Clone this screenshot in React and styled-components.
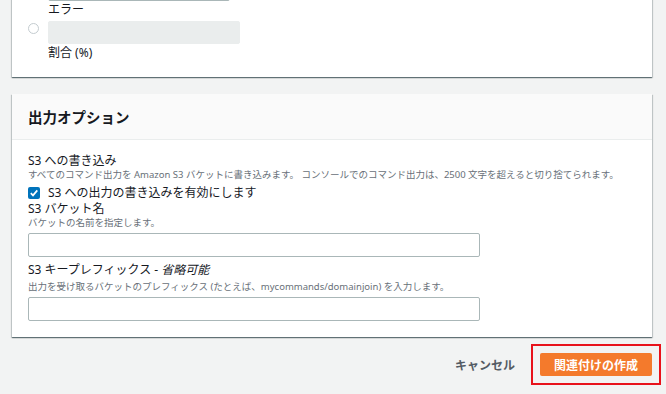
import React from "react";
import styled, { createGlobalStyle } from "styled-components";

const Global = createGlobalStyle`
  html, body { margin: 0; padding: 0; background: #f2f3f3; }
  body {
    font-family: "Noto Sans", "Noto Sans CJK JP", sans-serif;
    color: #16191f;
    width: 666px; height: 394px; overflow: hidden;
  }
  * { box-sizing: border-box; }
`;

const Page = styled.div`
  display: flex;
  flex-direction: column;
  padding: 0 14px 0 12px;
  margin-top: -23px;
`;

const Card = styled.section`
  background: #fff;
  box-shadow: 0 1px 1px 0 rgba(0, 28, 36, 0.45), 1px 1px 1px 0 rgba(0, 28, 36, 0.15),
    -1px 1px 1px 0 rgba(0, 28, 36, 0.15);
  margin-bottom: ${(p) => p.$mb || 0}px;
`;

const CardBody = styled.div`
  display: flex;
  flex-direction: column;
  padding: ${(p) => p.$pad};
`;

const CardHeader = styled.header`
  background: #fafafa;
  border-bottom: 1px solid #eaeded;
  height: 46px;
  display: flex;
  align-items: center;
  padding: 0 16px;
`;

const Title = styled.h2`
  margin: 0;
  font-size: 14.5px;
  font-weight: 700;
  line-height: 20px;
`;

const OptionRow = styled.div`
  display: flex;
  align-items: flex-start;
  gap: 9px;
  margin-bottom: ${(p) => p.$mb || 0}px;
`;

const Radio = styled.span`
  width: 11px;
  height: 11px;
  margin-top: 2px;
  border-radius: 50%;
  border: 1px solid #c4ccd0;
  background: #fff;
  flex: none;
  visibility: ${(p) => (p.$hidden ? "hidden" : "visible")};
`;

const OptionCol = styled.div`
  display: flex;
  flex-direction: column;
`;

const FieldBox = styled.div`
  width: ${(p) => p.$w}px;
  height: ${(p) => p.$h || 24}px;
  flex: none;
  border-radius: 2px;
  border: 1px solid ${(p) => (p.$disabled ? "#eaeded" : "#aab7b8")};
  background: ${(p) => (p.$disabled ? "#eaeded" : "#fff")};
`;

const OptionLabel = styled.span`
  font-size: 12px;
  line-height: 15px;
  height: 15px;
  margin-top: 1px;
`;

const Label = styled.div`
  font-size: 12px;
  line-height: 15px;
  height: 15px;
`;

const Italic = styled.span`
  font-style: italic;
`;

const Desc = styled.div`
  font-size: 9.5px;
  line-height: 13px;
  height: 13px;
  white-space: nowrap;
  color: #687078;
  margin-bottom: ${(p) => p.$mb || 0}px;
  margin-top: ${(p) => p.$mt || 0}px;
`;

const CheckRow = styled.label`
  display: flex;
  align-items: center;
  gap: 8px;
  font-size: 12px;
  line-height: 16px;
  height: 16px;
  margin-top: 4px;
`;

const CheckBox = styled.span`
  width: 12px;
  height: 12px;
  border-radius: 2px;
  background: #0073bb;
  display: flex;
  align-items: center;
  justify-content: center;
  flex: none;
`;

const Spacer = styled.div`
  height: ${(p) => p.$h}px;
  flex: none;
`;

const Footer = styled.div`
  display: flex;
  justify-content: flex-end;
  align-items: center;
  gap: 25px;
  padding-top: 16px;
`;

const LinkButton = styled.button`
  border: none;
  background: none;
  padding: 0;
  font-family: inherit;
  font-size: 12px;
  font-weight: 700;
  color: #545b64;
`;

const Highlight = styled.span`
  display: inline-flex;
  padding: 7px;
  margin: -9px;
  border: 2px solid #e8121b;
`;

const PrimaryButton = styled.button`
  border: none;
  background: #f47a2c;
  color: #fff;
  font-family: inherit;
  font-size: 12px;
  font-weight: 700;
  height: 23px;
  width: 112px;
  padding: 0;
  border-radius: 2px;
`;

export default function App() {
  return (
    <>
      <Global />
      <Page>
        <Card $mb={17}>
          <CardBody $pad="0 16px 17px 16px">
            <OptionRow $mb={4}>
              <Radio $hidden />
              <OptionCol>
                <FieldBox $w={182} />
                <OptionLabel>エラー</OptionLabel>
              </OptionCol>
            </OptionRow>
            <OptionRow>
              <Radio />
              <OptionCol>
                <FieldBox $w={192} $h={23} $disabled />
                <OptionLabel>割合 (%)</OptionLabel>
              </OptionCol>
            </OptionRow>
          </CardBody>
        </Card>
        <Card>
          <CardHeader>
            <Title>出力オプション</Title>
          </CardHeader>
          <CardBody $pad="13px 16px 16px 16px">
            <Label>S3 への書き込み</Label>
            <Desc>
              すべてのコマンド出力を Amazon S3 バケットに書き込みます。 コンソールでのコマンド出力は、2500
              文字を超えると切り捨てられます。
            </Desc>
            <CheckRow>
              <CheckBox>
                <svg width="10" height="10" viewBox="0 0 10 10">
                  <path d="M1.8 5.2 L4 7.4 L8.3 2.4" fill="none" stroke="#fff" strokeWidth="1.7" />
                </svg>
              </CheckBox>
              S3 への出力の書き込みを有効にします
            </CheckRow>
            <Label>S3 バケット名</Label>
            <Desc $mb={4}>バケットの名前を指定します。</Desc>
            <FieldBox $w={452} />
            <Spacer $h={5} />
            <Label>
              S3 キープレフィックス - <Italic>省略可能</Italic>
            </Label>
            <Desc $mt={3} $mb={4}>
              出力を受け取るバケットのプレフィックス (たとえば、mycommands/domainjoin) を入力します。
            </Desc>
            <FieldBox $w={452} />
          </CardBody>
        </Card>
        <Footer>
          <LinkButton>キャンセル</LinkButton>
          <Highlight>
            <PrimaryButton>関連付けの作成</PrimaryButton>
          </Highlight>
        </Footer>
      </Page>
    </>
  );
}
